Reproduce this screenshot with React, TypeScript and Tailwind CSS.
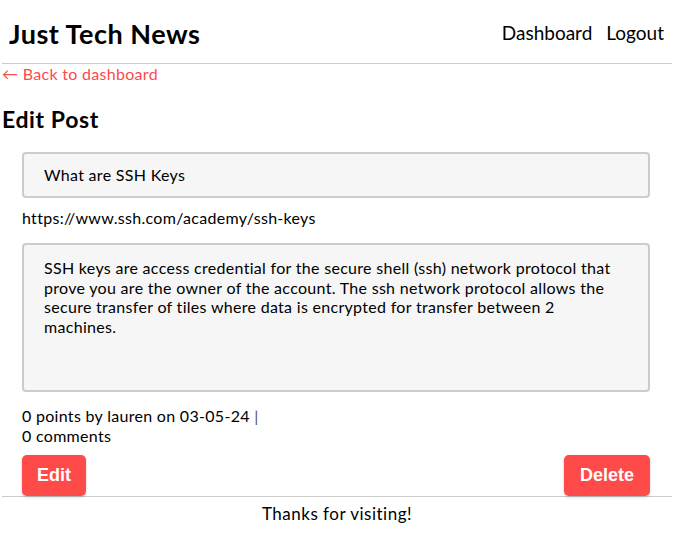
import * as React from "react"

const body =
  "SSH keys are access credential for the secure shell (ssh) network protocol that prove you are the owner of the account. The ssh network protocol allows the secure transfer of tiles where data is encrypted for transfer between 2 machines."

export default function App() {
  return (
    <div className="min-h-[546px] bg-white px-[2px] text-black tracking-[0.3px] font-['Lato',sans-serif]">
      <header className="flex h-[64px] items-center justify-between border-b border-[#cccccc] pl-[7px] pr-[8px] pt-[3px]">
        <h1 className="text-[27px] font-bold leading-none tracking-[0.5px]">Just Tech News</h1>
        <nav className="flex gap-[14px] text-[19px] tracking-normal">
          <a>Dashboard</a>
          <a>Logout</a>
        </nav>
      </header>

      <main>
        <a className="block text-[16px] leading-[20px] text-[#ff4a4a]">&larr; Back to dashboard</a>
        <h2 className="mt-[21px] mb-[19px] text-[23px] font-bold leading-[28px] tracking-[0.6px]">Edit Post</h2>

        <form className="flex flex-col pl-[20px] pr-[22px]">
          <div className="flex h-[46px] items-center rounded-[4px] border-2 border-[#cccccc] bg-[#f6f6f6] px-[20px] text-[16px]">
            What are SSH Keys
          </div>
          <p className="mt-[10px] mb-[15px] text-[16px] leading-[20px]">https://www.ssh.com/academy/ssh-keys</p>
          <div className="h-[149px] rounded-[4px] border-2 border-[#cccccc] bg-[#f6f6f6] px-[20px] pt-[13px] text-[16px] leading-[19.5px]">
            {body}
          </div>
          <div className="mt-[14px] text-[16px] leading-[20px]">
            <p>
              0 points by lauren on 03-05-24 <span className="text-[#555]">|</span>
            </p>
            <p>0 comments</p>
          </div>
          <div className="mt-[9px] flex justify-between">
            <button
              type="button"
              className="h-[41px] rounded-[5px] bg-[#ff4a4a] px-[15px] font-['Liberation_Sans',sans-serif] text-[18px] font-bold tracking-normal text-white shadow-[0_1px_3px_rgba(0,0,0,0.2)]"
            >
              Edit
            </button>
            <button
              type="button"
              className="h-[41px] rounded-[5px] bg-[#ff4a4a] px-[16px] font-['Liberation_Sans',sans-serif] text-[18px] font-bold tracking-normal text-white shadow-[0_1px_3px_rgba(0,0,0,0.2)]"
            >
              Delete
            </button>
          </div>
        </form>
      </main>

      <footer className="border-t border-[#cccccc] pt-[6px] text-center text-[17px] leading-[22px] tracking-[0.5px]">
        Thanks for visiting!
      </footer>
    </div>
  )
}
